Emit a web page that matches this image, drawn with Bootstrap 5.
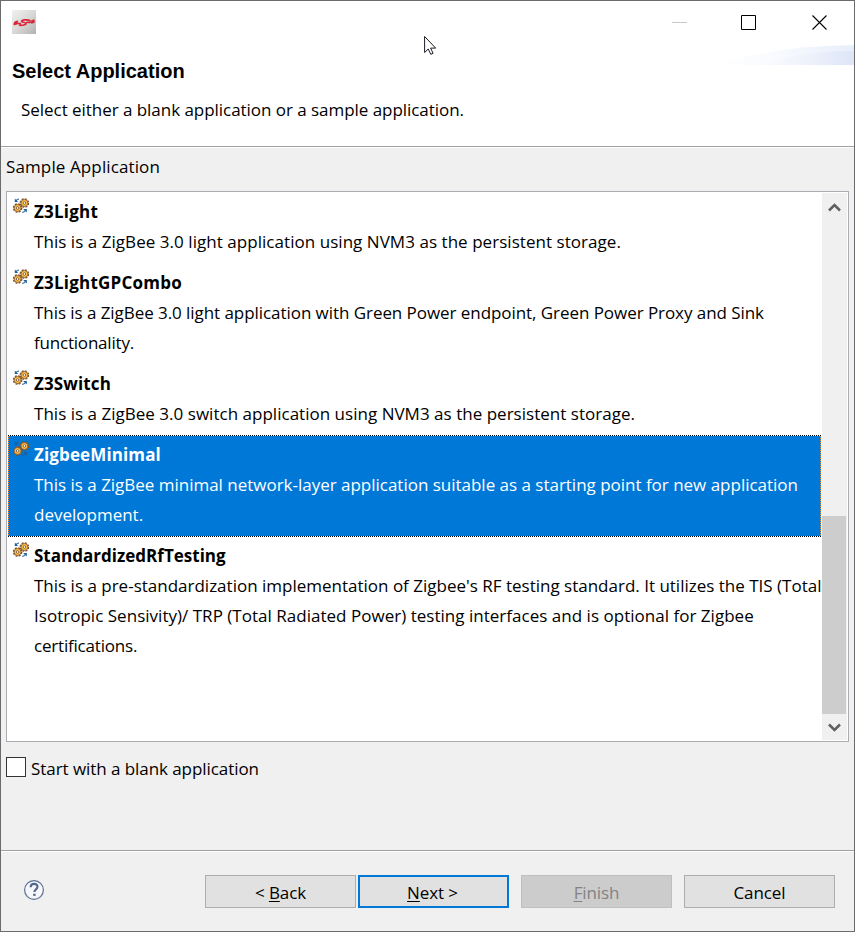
<!DOCTYPE html>
<html lang="en">
<head>
<meta charset="utf-8">
<meta name="viewport" content="width=device-width, initial-scale=1">
<title>Select Application</title>
<link href="https://cdn.jsdelivr.net/npm/bootstrap@5.3.0/dist/css/bootstrap.min.css" rel="stylesheet">
<style>
body{font-family:"Open Sans","Noto Sans",sans-serif;font-size:17px;line-height:30px;color:#000;background:#f0f0f0}
svg{display:block}
.dialog{width:855px;height:932px;border:1px solid #6b6b6b;background:#f0f0f0}
.banner{height:146px;border-bottom:1px solid #a0a0a0}
.titlebar{height:44px;padding:9px 26px 0 11px}
.wave{right:0;top:44px}
.pointer{left:423px;top:34px}
.heading{font-family:"Liberation Sans",Arial,sans-serif;font-size:20px;font-weight:700;line-height:24px;padding:14px 0 0 11px;margin:0}
.subtitle{padding:12px 0 0 20px;letter-spacing:-.042px}
.content{height:703px;border-top:1px solid #fff;padding:4px 5px 0 5px}
.caption{height:39px;letter-spacing:.117px}
.app-list{width:843px;height:551px;border:1px solid #abadb3;background:#fff}
.app-items{width:815px;padding-left:1px}
.app-item{height:101px;width:813px;padding:5px 0 0 5px;gap:5px}
.app-item.short{height:71px}
.app-item .gear{margin-top:1px;width:16px}
.app-item .txt{white-space:nowrap}
.app-item b{display:block;font-weight:700;letter-spacing:.13px}
.app-item b.wide{letter-spacing:.225px}
.app-item b.tight{letter-spacing:.01px}
.chosen{background-color:#0078d7;color:#fff;height:102px;margin-bottom:-1px;
 background-image:repeating-linear-gradient(90deg,#000 0 1px,#fff 1px 2px),repeating-linear-gradient(90deg,#000 0 1px,#fff 1px 2px),repeating-linear-gradient(180deg,#0078d7 0 1px,#ff8728 1px 2px),repeating-linear-gradient(180deg,#0078d7 0 1px,#ff8728 1px 2px);
 background-size:100% 1px,100% 1px,1px 100%,1px 100%;background-position:0 0,0 100%,0 0,100% 0;background-repeat:no-repeat}
.track{width:25px;height:547px;margin:1px 1px 0 0;background:#f0f0f0}
.thumb{width:24px;height:198px;background:#cdcdcd;margin-top:297px}
.t-a{letter-spacing:.046px}.t-b{letter-spacing:-.058px}.t-c{letter-spacing:-.2px}.t-d{letter-spacing:.021px}.t-e{letter-spacing:-.014px}
.tick{width:20px;height:20px;border:1px solid #333;background:#fff;margin-bottom:4px}
.blank-opt{margin-top:12px;gap:5px;letter-spacing:-.061px}
.actions{height:80px;border-top:1px solid #a0a0a0;box-shadow:inset 0 1px 0 #fff;padding:24px 19px 0 22px}
.act{width:151px;height:33px;border:1px solid #adadad;border-radius:0;background:#e1e1e1!important;color:#000;font-size:17px;line-height:30px;padding:2px 0 0;letter-spacing:-.1px}
.act u{text-decoration-thickness:1px;text-underline-offset:2px}
.act.default{border:2px solid #0078d7;padding:1px 2px 0 0;line-height:30px;margin-left:2px}
.act.off,.act.off:disabled{background:#ccc!important;border-color:#bfbfbf;color:#838383;opacity:1}
.act.apart{margin-left:12px}
</style>
</head>
<body>
<svg width="0" height="0" class="position-absolute" aria-hidden="true">
 <defs>
  <g id="wheel">
   <circle r="4.1" fill="none" stroke="#80522a" stroke-width="1.500" stroke-dasharray="1.9 1.320"/>
   <circle r="3.500" fill="#fcc048" stroke="#80522a" stroke-width=".8"/>
   <circle r="1.300" fill="#fff" stroke="#6b4c38" stroke-width=".8"/>
  </g>
  <symbol id="gears" viewBox="0 0 16 16">
   <use href="#wheel" x="11.400" y="5"/><use href="#wheel" x="4.600" y="10"/>
   <path d="M6 1Q4.400 1 3 2.600" fill="none" stroke="#1b5e9e" stroke-width="1.200"/><path d="M1.800.6v3.400h3.400z" fill="#1b5e9e"/>
   <path d="M9.200 14.300q2 0 3.200-1.800" fill="none" stroke="#1b5e9e" stroke-width="1.200"/><path d="M10.200 10.900h3.600v3.500z" fill="#1b5e9e"/>
  </symbol>
 </defs>
</svg>
<div class="dialog overflow-hidden position-relative">
 <header class="banner bg-white">
  <div class="titlebar d-flex justify-content-between">
   <svg width="24" height="24" viewBox="0 0 24 24">
    <defs><linearGradient id="tile" x1="0" y1="0" x2="1" y2="1"><stop offset="0" stop-color="#f1f1f1"/><stop offset=".5" stop-color="#d9d9d8"/><stop offset="1" stop-color="#b3b1ae"/></linearGradient></defs>
    <path fill="url(#tile)" d="M0 0h24v24H0z"/>
    <path fill="none" stroke="#dc2538" stroke-width="1.600" stroke-linecap="round" stroke-linejoin="round" d="M18 10.400C15 9.400 10 9.800 9.500 11.200c-.3 1.100 4.800.9 4.800 2.400 0 1.400-4.500 2-6.800 1.600M5.500 11.400C4 11.600 2.400 12.600 2.300 14.200 3.500 13 5 13.400 8.400 13.600M15 12.300c3 .2 6 0 6.700-.8"/>
    <path fill="#dc2538" d="M2 12.400l3.400-1.500.3 3.200-3.800 1.500zM19.300 10.200l2.900-.9q1.200 2-.1 3.800l-3 .6z"/>
   </svg>
   <svg width="156" height="26" viewBox="0 0 156 26" fill="none">
    <path d="M0 12.500h15" stroke="#c8c8c8"/>
    <path d="M69.500 5.500h14v14h-14z" stroke="#000"/>
    <path d="M140.500 5.500l14 14M154.500 5.500l-14 14" stroke="#000" stroke-width="1.100"/>
   </svg>
  </div>
  <svg class="wave position-absolute" width="140" height="20" viewBox="0 0 140 20">
   <defs><linearGradient id="w1"><stop offset="0" stop-color="#fff"/><stop offset=".4" stop-color="#f9fbfe"/><stop offset="1" stop-color="#e8eefb"/></linearGradient>
   <linearGradient id="w2"><stop offset="0" stop-color="#fbfcff"/><stop offset=".55" stop-color="#edf1fb"/><stop offset="1" stop-color="#dde5f7"/></linearGradient></defs>
   <path fill="url(#w1)" d="M0 20Q60 1 140 0v20z"/><path fill="url(#w2)" d="M45 20Q88 6 140 6v14z"/>
  </svg>
  <svg class="pointer position-absolute" width="14" height="21" viewBox="0 0 14 21"><path d="M.6 1.500v16l3.600-3.500 2.600 5.300 2.300-1-2.500-5.200h5.100z" fill="#fff" stroke="#1a1a26" stroke-width="1"/></svg>
  <h1 class="heading">Select Application</h1>
  <div class="subtitle">Select either a blank application or a sample application.</div>
 </header>
 <main class="content">
  <div class="caption">Sample Application</div>
  <div class="app-list d-flex justify-content-between">
   <div class="app-items">
    <div class="app-item short d-flex"><svg class="gear flex-shrink-0" height="16"><use href="#gears"/></svg><div class="txt"><b class="wide">Z3Light</b><div class="t-a">This is a ZigBee 3.0 light application using NVM3 as the persistent storage.</div></div></div>
    <div class="app-item d-flex"><svg class="gear flex-shrink-0" height="16"><use href="#gears"/></svg><div class="txt"><b class="wide">Z3LightGPCombo</b><div class="t-b">This is a ZigBee 3.0 light application with Green Power endpoint, Green Power Proxy and Sink</div><div class="t-c">functionality.</div></div></div>
    <div class="app-item short d-flex"><svg class="gear flex-shrink-0" height="16"><use href="#gears"/></svg><div class="txt"><b>Z3Switch</b><div class="t-d">This is a ZigBee 3.0 switch application using NVM3 as the persistent storage.</div></div></div>
    <div class="app-item chosen d-flex"><svg class="gear flex-shrink-0" height="16"><use href="#gears"/></svg><div class="txt"><b>ZigbeeMinimal</b><div class="t-e">This is a ZigBee minimal network-layer application suitable as a starting point for new application</div><div>development.</div></div></div>
    <div class="app-item d-flex"><svg class="gear flex-shrink-0" height="16"><use href="#gears"/></svg><div class="txt"><b class="tight">StandardizedRfTesting</b><div>This is a pre-standardization implementation of Zigbee's RF testing standard. It utilizes the TIS (Total</div><div class="t-d">Isotropic Sensivity)/ TRP (Total Radiated Power) testing interfaces and is optional for Zigbee</div><div class="t-c">certifications.</div></div></div>
   </div>
   <div class="track flex-shrink-0">
    <svg width="25" height="26" viewBox="0 0 25 26"><path d="M7 17.500l5.500-5.500 5.500 5.500" fill="none" stroke="#606060" stroke-width="2.500"/></svg>
    <div class="thumb"></div>
    <svg width="25" height="26" viewBox="0 0 25 26"><path d="M7 10.500l5.500 5.500 5.500-5.500" fill="none" stroke="#606060" stroke-width="2.500"/></svg>
   </div>
  </div>
  <label class="blank-opt d-flex align-items-center"><span class="tick"></span><span>Start with a blank application</span></label>
 </main>
 <footer class="actions d-flex">
  <svg class="me-auto mt-1" width="22" height="22" viewBox="0 0 22 22"><circle cx="11" cy="11" r="9.400" fill="#f5f7fa" stroke="#5c6f92" stroke-width="1.200"/><path d="M7.600 8.200C7.700 5.800 9.200 4.900 11.100 4.900c2 0 3.400 1.100 3.400 2.900 0 2.700-3.100 2.500-3.100 5.200" fill="none" stroke="#52688e" stroke-width="2.100"/><path d="M10.200 14.700h2.400v2.200h-2.400z" fill="#52688e"/></svg>
  <button class="btn act">&lt; <u>B</u>ack</button>
  <button class="btn act default"><u>N</u>ext &gt;</button>
  <button class="btn act off apart" disabled><u>F</u>inish</button>
  <button class="btn act apart">Cancel</button>
 </footer>
</div>
<script src="https://cdn.jsdelivr.net/npm/bootstrap@5.3.0/dist/js/bootstrap.bundle.min.js"></script>
</body>
</html>
